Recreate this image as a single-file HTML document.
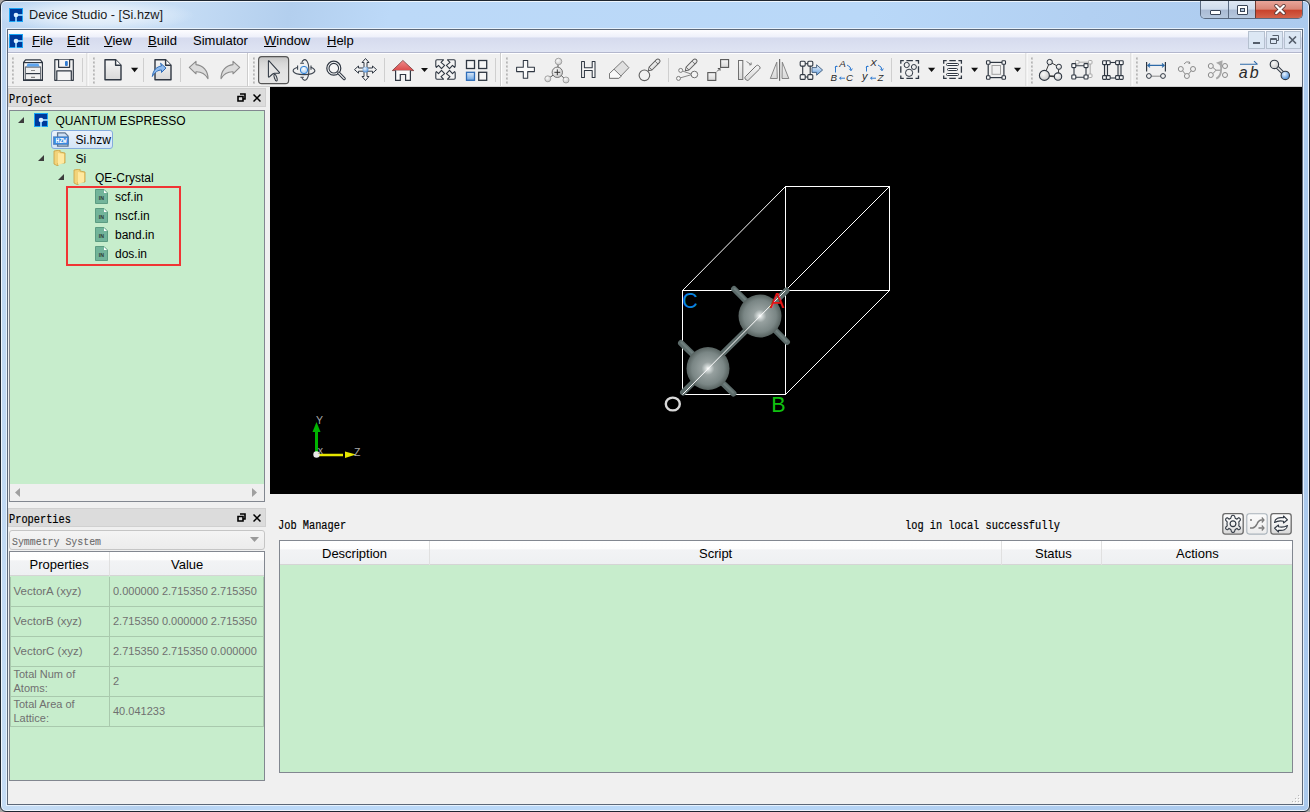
<!DOCTYPE html>
<html><head><meta charset="utf-8">
<style>
*{margin:0;padding:0;box-sizing:border-box}
html,body{width:1310px;height:812px;overflow:hidden;background:#a8a6a4;font-family:"Liberation Sans",sans-serif;}
.a{position:absolute}
#frame{left:0;top:0;width:1310px;height:812px;border:1px solid #1e2630;border-radius:6px 6px 6px 6px;box-shadow:inset 0 0 0 1px rgba(255,255,255,0.75);
  background:linear-gradient(100deg,#bcd6f2 0%,#c6ddf5 12%,#b3cfee 20%,#bcd9f8 27%,#b9d8f8 60%,#b2d0f2 75%,#a9c8ec 100%);}
#title{left:29px;top:8px;font-size:12.7px;color:#1a1a1a;}
#client{left:7px;top:29px;width:1296px;height:776px;border:1px solid #5d6878;background:#f0f0f0;box-shadow:0 0 0 1px rgba(235,244,253,0.9);}
#menubar{left:8px;top:30px;width:1294px;height:23px;background:linear-gradient(#fdfdff 0%,#eef0fa 32%,#d6dbee 36%,#dfe4f3 100%);border-bottom:1px solid #b3b7cd}
.menu{top:33px;font-size:13px;color:#000;line-height:15px}
.menu u{text-decoration:underline;text-underline-offset:1px}
#toolbar{left:8px;top:53px;width:1294px;height:34px;background:#f0f0f0;border-top:1px solid #ffffff;border-bottom:1px solid #d0d0d0}
.green{background:#c7edcc}
.dockhdr{background:#dcdcdc;border:1px solid #d0d0d0}
.mono{font-family:"Liberation Mono",monospace;font-weight:normal;-webkit-text-stroke:0.2px currentColor;transform-origin:0 0;transform:scaleX(0.86);white-space:nowrap;color:#000}
#viewport{left:270px;top:87px;width:1032px;height:407px;background:#000}
.sep{width:1px;height:24px;top:58px;background:#c9c9c9;border-right:1px solid #fbfbfb;width:2px}
.gsep{width:2px;top:54px;height:32px;background:#d6d6d6;border-right:1px solid #fff;width:2px}
.grip{top:58px;width:3px;height:24px;background:repeating-linear-gradient(#b8b8b8 0 1px,transparent 1px 3px)}
.tree{font-size:12px;color:#000;line-height:14px;white-space:nowrap}
.cap{font-size:11.5px;color:#707070;white-space:nowrap;line-height:14px}
.val{font-size:11px;color:#707070;white-space:nowrap;line-height:14px}
.hdr{font-size:13px;color:#000;white-space:nowrap;line-height:15px}
.ic{position:absolute}
</style></head>
<body>
<div id="frame" class="a"></div>
<div class="a" style="left:0;top:1px;width:200px;height:28px;background:radial-gradient(ellipse 100px 17px at 95px 14px,rgba(240,246,252,0.95) 0%,rgba(230,240,250,0.75) 55%,rgba(220,234,248,0) 100%)"></div>
<!-- app icon -->
<svg class="ic" style="left:9px;top:8px" width="14" height="14" viewBox="0 0 14 14"><rect width="14" height="14" fill="#18a4f4"/><rect x="1" y="1" width="12" height="12" fill="#00399a"/><rect x="6.1" y="7" width="1.8" height="7" fill="#8fd3ff"/><rect x="7" y="6.1" width="7" height="1.8" fill="#8fd3ff"/><circle cx="7" cy="7" r="2.3" fill="#dceeff"/></svg>
<div id="title" class="a">Device Studio - [Si.hzw]</div>
<!-- caption buttons -->
<div class="a" style="left:1200px;top:1px;width:103px;height:18px;border:1px solid #5a6a80;border-top:none;border-radius:0 0 5px 5px;overflow:hidden">
  <div class="a" style="left:0;top:0;width:28px;height:18px;background:linear-gradient(#dfe8f3 0%,#cfdcec 45%,#aabbd4 50%,#b7c9df 100%);border-right:1px solid #5a6a80"></div>
  <div class="a" style="left:28px;top:0;width:27px;height:18px;background:linear-gradient(#dfe8f3 0%,#cfdcec 45%,#aabbd4 50%,#b7c9df 100%);border-right:1px solid #6b3a30"></div>
  <div class="a" style="left:55px;top:0;width:47px;height:18px;background:linear-gradient(#e8a59a 0%,#d98677 45%,#c9432c 52%,#d5684f 100%)"></div>
  <div class="a" style="left:9px;top:9px;width:11px;height:5px;background:#fff;border:1px solid #3a4658;border-radius:1px"></div>
  <div class="a" style="left:36px;top:4px;width:11px;height:10px;border:1px solid #3a4658;border-radius:1px;background:#fff"></div>
  <div class="a" style="left:39px;top:7px;width:5px;height:4px;border:1px solid #3a4658;background:#b8c9de"></div>
  <svg class="ic" style="left:73px;top:3px" width="12" height="11" viewBox="0 0 12 11"><path d="M2.2 1.8 L9.8 9.2 M9.8 1.8 L2.2 9.2" stroke="#5a3a38" stroke-width="3.8" stroke-linecap="round"/><path d="M2.2 1.8 L9.8 9.2 M9.8 1.8 L2.2 9.2" stroke="#fff" stroke-width="2.2" stroke-linecap="round"/></svg>
</div>

<div id="client" class="a"></div>
<div id="menubar" class="a"></div>
<svg class="ic" style="left:9px;top:34px" width="14" height="14" viewBox="0 0 14 14"><rect width="14" height="14" fill="#18a4f4"/><rect x="1" y="1" width="12" height="12" fill="#00399a"/><rect x="6.1" y="7" width="1.8" height="7" fill="#8fd3ff"/><rect x="7" y="6.1" width="7" height="1.8" fill="#8fd3ff"/><circle cx="7" cy="7" r="2.3" fill="#dceeff"/></svg>
<div class="a menu" style="left:32px"><u>F</u>ile</div>
<div class="a menu" style="left:67px"><u>E</u>dit</div>
<div class="a menu" style="left:104px"><u>V</u>iew</div>
<div class="a menu" style="left:148px"><u>B</u>uild</div>
<div class="a menu" style="left:193px">Simulator</div>
<div class="a menu" style="left:264px"><u>W</u>indow</div>
<div class="a menu" style="left:327px"><u>H</u>elp</div>
<!-- mdi buttons -->
<div class="a" style="left:1248px;top:31px;width:17px;height:18px;border:1px solid #b5c0cf;background:#dce7f4"></div>
<div class="a" style="left:1266px;top:31px;width:17px;height:18px;border:1px solid #b5c0cf;background:#dce7f4"></div>
<div class="a" style="left:1284px;top:31px;width:17px;height:18px;border:1px solid #b5c0cf;background:#dce7f4"></div>
<div class="a" style="left:1253px;top:42px;width:7px;height:2px;background:#555e6b"></div>
<svg class="ic" style="left:1270px;top:35px" width="9" height="9" viewBox="0 0 9 9"><path d="M2.5 0.5h6v5h-2 M0.5 3.5h6v5h-6z M0.5 4.5h6" stroke="#555e6b" fill="none"/></svg>
<svg class="ic" style="left:1288px;top:36px" width="9" height="8" viewBox="0 0 9 8"><path d="M1 0.5 L8 7.5 M8 0.5 L1 7.5" stroke="#555e6b" stroke-width="1.6"/></svg>

<div id="toolbar" class="a"></div>
<svg class="ic" style="left:0;top:0" width="1310" height="90" viewBox="0 0 1310 90">
<defs>
<linearGradient id="gg" x1="0" y1="0" x2="0" y2="1"><stop offset="0" stop-color="#f6f6f6"/><stop offset="1" stop-color="#d8d8d8"/></linearGradient>
<linearGradient id="gb" x1="0" y1="0" x2="0" y2="1"><stop offset="0" stop-color="#dbe9f8"/><stop offset="1" stop-color="#6fa7e3"/></linearGradient>
<radialGradient id="rb" cx="0.4" cy="0.35" r="0.7"><stop offset="0" stop-color="#eef6ff"/><stop offset="1" stop-color="#3d86d6"/></radialGradient>
<linearGradient id="selg" x1="0" y1="0" x2="0" y2="1"><stop offset="0" stop-color="#c4c4c4"/><stop offset="0.25" stop-color="#d8d8d8"/><stop offset="0.5" stop-color="#e2e2e2"/><stop offset="1" stop-color="#e6e6e6"/></linearGradient>
<linearGradient id="gb3" x1="0" y1="0" x2="0" y2="1"><stop offset="0" stop-color="#f4f8fd"/><stop offset="1" stop-color="#5f9de0"/></linearGradient>
<radialGradient id="rb2" cx="0.45" cy="0.35" r="0.65"><stop offset="0" stop-color="#ffffff"/><stop offset="1" stop-color="#9cc3ea"/></radialGradient>
<radialGradient id="rg" cx="0.4" cy="0.35" r="0.7"><stop offset="0" stop-color="#fafafa"/><stop offset="1" stop-color="#c6c6c6"/></radialGradient>
<linearGradient id="gr" x1="0" y1="0" x2="0" y2="1"><stop offset="0" stop-color="#f08a8a"/><stop offset="1" stop-color="#d94a4a"/></linearGradient>
<pattern id="grip" width="3" height="3.5" patternUnits="userSpaceOnUse"><rect x="1" y="1" width="2" height="2" fill="#a8a8a8"/><rect x="2" y="1" width="1" height="1" fill="#e8e8e8"/></pattern>
</defs>
<!-- group separators -->
<g fill="#cdcdcd">
<rect x="86.5" y="53" width="1" height="33"/><rect x="247" y="53" width="1" height="33"/><rect x="500" y="53" width="1" height="33"/><rect x="1025.5" y="53" width="1" height="33"/><rect x="1130.5" y="53" width="1" height="33"/>
</g>
<g fill="#ffffff">
<rect x="87.5" y="53" width="1" height="33"/><rect x="248" y="53" width="1" height="33"/><rect x="501" y="53" width="1" height="33"/><rect x="1026.5" y="53" width="1" height="33"/><rect x="1131.5" y="53" width="1" height="33"/>
</g>
<!-- grips -->
<g><rect x="12" y="57.5" width="2" height="2" fill="#b4b4b4"/><rect x="13" y="57.5" width="1" height="1" fill="#d8d8d8"/><rect x="12" y="61.5" width="2" height="2" fill="#b4b4b4"/><rect x="13" y="61.5" width="1" height="1" fill="#d8d8d8"/><rect x="12" y="65.5" width="2" height="2" fill="#b4b4b4"/><rect x="13" y="65.5" width="1" height="1" fill="#d8d8d8"/><rect x="12" y="69.5" width="2" height="2" fill="#b4b4b4"/><rect x="13" y="69.5" width="1" height="1" fill="#d8d8d8"/><rect x="12" y="73.5" width="2" height="2" fill="#b4b4b4"/><rect x="13" y="73.5" width="1" height="1" fill="#d8d8d8"/><rect x="12" y="77.5" width="2" height="2" fill="#b4b4b4"/><rect x="13" y="77.5" width="1" height="1" fill="#d8d8d8"/><rect x="12" y="81.5" width="2" height="2" fill="#b4b4b4"/><rect x="13" y="81.5" width="1" height="1" fill="#d8d8d8"/><rect x="93" y="57.5" width="2" height="2" fill="#b4b4b4"/><rect x="94" y="57.5" width="1" height="1" fill="#d8d8d8"/><rect x="93" y="61.5" width="2" height="2" fill="#b4b4b4"/><rect x="94" y="61.5" width="1" height="1" fill="#d8d8d8"/><rect x="93" y="65.5" width="2" height="2" fill="#b4b4b4"/><rect x="94" y="65.5" width="1" height="1" fill="#d8d8d8"/><rect x="93" y="69.5" width="2" height="2" fill="#b4b4b4"/><rect x="94" y="69.5" width="1" height="1" fill="#d8d8d8"/><rect x="93" y="73.5" width="2" height="2" fill="#b4b4b4"/><rect x="94" y="73.5" width="1" height="1" fill="#d8d8d8"/><rect x="93" y="77.5" width="2" height="2" fill="#b4b4b4"/><rect x="94" y="77.5" width="1" height="1" fill="#d8d8d8"/><rect x="93" y="81.5" width="2" height="2" fill="#b4b4b4"/><rect x="94" y="81.5" width="1" height="1" fill="#d8d8d8"/><rect x="253" y="57.5" width="2" height="2" fill="#b4b4b4"/><rect x="254" y="57.5" width="1" height="1" fill="#d8d8d8"/><rect x="253" y="61.5" width="2" height="2" fill="#b4b4b4"/><rect x="254" y="61.5" width="1" height="1" fill="#d8d8d8"/><rect x="253" y="65.5" width="2" height="2" fill="#b4b4b4"/><rect x="254" y="65.5" width="1" height="1" fill="#d8d8d8"/><rect x="253" y="69.5" width="2" height="2" fill="#b4b4b4"/><rect x="254" y="69.5" width="1" height="1" fill="#d8d8d8"/><rect x="253" y="73.5" width="2" height="2" fill="#b4b4b4"/><rect x="254" y="73.5" width="1" height="1" fill="#d8d8d8"/><rect x="253" y="77.5" width="2" height="2" fill="#b4b4b4"/><rect x="254" y="77.5" width="1" height="1" fill="#d8d8d8"/><rect x="253" y="81.5" width="2" height="2" fill="#b4b4b4"/><rect x="254" y="81.5" width="1" height="1" fill="#d8d8d8"/><rect x="506" y="57.5" width="2" height="2" fill="#b4b4b4"/><rect x="507" y="57.5" width="1" height="1" fill="#d8d8d8"/><rect x="506" y="61.5" width="2" height="2" fill="#b4b4b4"/><rect x="507" y="61.5" width="1" height="1" fill="#d8d8d8"/><rect x="506" y="65.5" width="2" height="2" fill="#b4b4b4"/><rect x="507" y="65.5" width="1" height="1" fill="#d8d8d8"/><rect x="506" y="69.5" width="2" height="2" fill="#b4b4b4"/><rect x="507" y="69.5" width="1" height="1" fill="#d8d8d8"/><rect x="506" y="73.5" width="2" height="2" fill="#b4b4b4"/><rect x="507" y="73.5" width="1" height="1" fill="#d8d8d8"/><rect x="506" y="77.5" width="2" height="2" fill="#b4b4b4"/><rect x="507" y="77.5" width="1" height="1" fill="#d8d8d8"/><rect x="506" y="81.5" width="2" height="2" fill="#b4b4b4"/><rect x="507" y="81.5" width="1" height="1" fill="#d8d8d8"/><rect x="1031" y="57.5" width="2" height="2" fill="#b4b4b4"/><rect x="1032" y="57.5" width="1" height="1" fill="#d8d8d8"/><rect x="1031" y="61.5" width="2" height="2" fill="#b4b4b4"/><rect x="1032" y="61.5" width="1" height="1" fill="#d8d8d8"/><rect x="1031" y="65.5" width="2" height="2" fill="#b4b4b4"/><rect x="1032" y="65.5" width="1" height="1" fill="#d8d8d8"/><rect x="1031" y="69.5" width="2" height="2" fill="#b4b4b4"/><rect x="1032" y="69.5" width="1" height="1" fill="#d8d8d8"/><rect x="1031" y="73.5" width="2" height="2" fill="#b4b4b4"/><rect x="1032" y="73.5" width="1" height="1" fill="#d8d8d8"/><rect x="1031" y="77.5" width="2" height="2" fill="#b4b4b4"/><rect x="1032" y="77.5" width="1" height="1" fill="#d8d8d8"/><rect x="1031" y="81.5" width="2" height="2" fill="#b4b4b4"/><rect x="1032" y="81.5" width="1" height="1" fill="#d8d8d8"/><rect x="1136" y="57.5" width="2" height="2" fill="#b4b4b4"/><rect x="1137" y="57.5" width="1" height="1" fill="#d8d8d8"/><rect x="1136" y="61.5" width="2" height="2" fill="#b4b4b4"/><rect x="1137" y="61.5" width="1" height="1" fill="#d8d8d8"/><rect x="1136" y="65.5" width="2" height="2" fill="#b4b4b4"/><rect x="1137" y="65.5" width="1" height="1" fill="#d8d8d8"/><rect x="1136" y="69.5" width="2" height="2" fill="#b4b4b4"/><rect x="1137" y="69.5" width="1" height="1" fill="#d8d8d8"/><rect x="1136" y="73.5" width="2" height="2" fill="#b4b4b4"/><rect x="1137" y="73.5" width="1" height="1" fill="#d8d8d8"/><rect x="1136" y="77.5" width="2" height="2" fill="#b4b4b4"/><rect x="1137" y="77.5" width="1" height="1" fill="#d8d8d8"/><rect x="1136" y="81.5" width="2" height="2" fill="#b4b4b4"/><rect x="1137" y="81.5" width="1" height="1" fill="#d8d8d8"/></g>
<!-- separators -->
<g fill="#cfcfcf">
<rect x="82" y="58" width="1" height="24"/><rect x="143" y="58" width="1" height="24"/><rect x="180" y="58" width="1" height="24"/><rect x="384" y="58" width="1" height="24"/><rect x="495" y="58" width="1" height="24"/><rect x="668" y="58" width="1" height="24"/><rect x="891" y="58" width="1" height="24"/>
</g>
<!-- cabinet -->
<g stroke="#2f3742" stroke-width="1.2" stroke-linejoin="round">
<path d="M25.6 59.8 H40.4 L42.4 62.4 V80.4 H23.6 V62.4 Z" fill="#f6f6f6"/>
<path d="M23.6 62.6 H42.4" fill="none"/>
<path d="M25.3 67 H40.7 V80 H25.3 Z" fill="#f0f0f0"/>
<path d="M25.3 73.6 H40.7" fill="none"/>
</g>
<path d="M27.6 63.6 H38.4 L39.6 66.4 H26.4 Z" fill="#5ea5ef"/>
<path d="M24.3 63.2 L25.3 67 V80 H24.3 Z M41.7 63.2 L40.7 67 V80 H41.7 Z" fill="#dcdcdc"/>
<rect x="31" y="70" width="4" height="1" fill="#8a8a8a"/><rect x="31" y="76.8" width="4" height="1" fill="#6a6a6a"/>
<rect x="24" y="79.4" width="18" height="1.6" fill="#2f3742"/>
<!-- floppy -->
<g stroke="#2f3742" stroke-width="1.2" stroke-linejoin="round">
<path d="M54.8 59.7 H73.3 V80.3 H54.8 Z" fill="#f0f0f0"/>
<path d="M58.6 59.7 V67.3 H69.6 V59.7" fill="#f4f4f4"/>
<path d="M56.8 80.3 V70.8 H71.3 V80.3" fill="#f4f4f4"/>
</g>
<rect x="65" y="61" width="2.8" height="5" rx="1" fill="#2f7ad0"/>
<!-- new doc -->
<path d="M105 59.8 H115.6 L121 65.2 V79.8 H105 Z" fill="url(#gg)" stroke="#2f3742" stroke-width="1.4" stroke-linejoin="round"/>
<path d="M115.6 59.8 V65.2 H121" fill="#fff" stroke="#2f3742" stroke-width="1.4" stroke-linejoin="round"/>
<path d="M131 67.8 H138.2 L134.6 72.2 Z" fill="#111"/>
<!-- import doc -->
<path d="M155 59.8 H165.6 L171 65.2 V79.8 H155 Z" fill="url(#gg)" stroke="#2f3742" stroke-width="1.4" stroke-linejoin="round"/>
<path d="M165.6 59.8 V65.2 H171" fill="#fff" stroke="#2f3742" stroke-width="1.4" stroke-linejoin="round"/>
<path d="M152.3 76.5 C153 70 157 66.5 161.5 66 L160.5 63.2 L166 68 L161.5 72.5 L161.5 70 C158 70 155 72 152.3 76.5 Z" fill="#8fbbef" stroke="#2f6db8" stroke-width="1"/>
<!-- undo/redo -->
<path d="M189.3 67.4 L196 61.3 V64.6 C203 65.5 208 70.5 208 78.6 C205 73.5 201.5 71.5 196 71.7 V73.8 Z" fill="#dcdcdc" stroke="#8a8a8a" stroke-width="1.1" stroke-linejoin="round"/>
<path d="M239.7 67.4 L233 61.3 V64.6 C226 65.5 221 70.5 221 78.6 C224 73.5 227.5 71.5 233 71.7 V73.8 Z" fill="#dcdcdc" stroke="#8a8a8a" stroke-width="1.1" stroke-linejoin="round"/>
<!-- selected pointer button -->
<rect x="258.6" y="56.6" width="30" height="27" rx="3.2" fill="url(#selg)" stroke="#565656" stroke-width="1.2"/>
<ellipse cx="275.6" cy="77.6" rx="1.2" ry="3.6" transform="rotate(-18 275.6 77.6)" fill="#e0e0e0" stroke="#2f3742" stroke-width="1"/><path d="M269 60.8 Q268.4 60.4 268.4 61.2 V76.4 Q268.4 77.6 269.4 76.8 L272.6 74 L274.4 73.2 H279 Q279.8 73 279.4 72.3 Z" fill="#e4e4e4" stroke="#2f3742" stroke-width="1.05" stroke-linejoin="round"/>
<!-- rotate -->
<g fill="none" stroke="#3a424d" stroke-width="1.1">
<path d="M297.8 67.2 C294.5 68.2 292.8 69.8 293.2 71.3 C294 73.6 299 74.6 304 74.6 C309 74.6 314 73.6 314.8 71.3 C315.2 69.8 313.5 68.2 310.8 67.2"/>
<path d="M297.6 65.6 V69.8 M311 65.6 V69.8"/>
<path d="M301.8 62.6 C302.5 59.8 305 58.8 306.6 60.6 C309.6 64 309.6 76 306.6 79.4 C305 81 302.6 80 301.8 77.4"/>
<path d="M300.2 63.3 H304 M300.4 77.3 H303.8"/>
</g>
<circle cx="304" cy="70" r="3.7" fill="url(#rb2)" stroke="#2f80d4" stroke-width="1"/>
<!-- zoom -->
<circle cx="333.8" cy="68.2" r="7" fill="#f6f6f6" stroke="#2f3742" stroke-width="1.2"/>
<circle cx="333.8" cy="68.2" r="4.8" fill="none" stroke="#2f3742" stroke-width="1.1"/>
<path d="M338.8 73.2 L344.2 78.6" stroke="#2f3742" stroke-width="3.2" stroke-linecap="round"/>
<path d="M338.8 73.2 L344.2 78.6" stroke="#f4f4f4" stroke-width="1.2" stroke-linecap="round"/>
<!-- move -->
<path d="M365.5 58.5 L369 62.5 H367 V68 H372.5 V66 L376.5 69.6 L372.5 73.2 V71.2 H367 V76.5 H369 L365.5 80.5 L362 76.5 H364 V71.2 H358.5 V73.2 L354.5 69.6 L358.5 66 V68 H364 V62.5 H362 Z" fill="#f4f4f4" stroke="#2f3742" stroke-width="1" stroke-linejoin="round"/>
<circle cx="365.5" cy="69.6" r="2.9" fill="url(#rb)"/>
<!-- home -->
<path d="M392.3 70.6 L402.9 60.4 L413.8 70.6 Z" fill="url(#gr)" stroke="#6a3030" stroke-width="0.7"/>
<path d="M395.6 70.6 V80.3 H400.3 V74.5 H405.6 V80.3 H410.4 V70.6" fill="#fafafa" stroke="#2f3742" stroke-width="1.2"/>
<path d="M421 67.9 H428 L424.5 72 Z" fill="#111"/>
<!-- expand arrows -->
<g fill="#f4f4f4" stroke="#2f3742" stroke-width="1.1" stroke-linejoin="round">
<path id="exa" d="M435.8 61 Q435.8 59.8 437 59.8 H443.5 L441 62.4 L444.6 65.4 L441.5 68.6 L438.5 65.4 L436.4 67.4 Q435.8 66.8 435.8 66 Z"/>
<use href="#exa" transform="translate(891 0) scale(-1 1)"/>
<use href="#exa" transform="translate(0 139) scale(1 -1)"/>
<use href="#exa" transform="translate(891 139) scale(-1 -1)"/>
</g>
<!-- grid -->
<g stroke="#2f3742" stroke-width="1.3" fill="#f6f6f6">
<rect x="466.5" y="60.5" width="8" height="8"/><rect x="478.7" y="60.5" width="8" height="8"/>
<rect x="466.5" y="72.3" width="8" height="8" fill="url(#gb)" stroke="#2f6db8"/><rect x="478.7" y="72.3" width="8" height="8"/>
</g>
<!-- plus -->
<path d="M523.3 60.5 H527.7 V67.2 H534.4 V71.6 H527.7 V78.3 H523.3 V71.6 H516.6 V67.2 H523.3 Z" fill="#fafafa" stroke="#2f3742" stroke-width="1.05" stroke-linejoin="round"/>
<!-- atom plus -->
<g stroke="#555" stroke-width="1"><line x1="558.3" y1="62" x2="557.5" y2="72"/><line x1="547.7" y1="79" x2="557.5" y2="72"/><line x1="566" y1="80" x2="557.5" y2="72"/></g>
<circle cx="558.5" cy="61.5" r="3.3" fill="url(#rg)" stroke="#8a8a8a" stroke-width="0.7"/>
<circle cx="547.8" cy="78.8" r="3" fill="url(#rg)" stroke="#8a8a8a" stroke-width="0.7"/>
<circle cx="566" cy="80" r="3" fill="url(#rg)" stroke="#8a8a8a" stroke-width="0.7"/>
<circle cx="557.3" cy="72.3" r="5.2" fill="url(#rg)" stroke="#6a6a6a" stroke-width="0.9"/>
<path d="M557.3 69.4 V75.2 M554.4 72.3 H560.2" stroke="#333" stroke-width="1"/>
<!-- H -->
<path d="M581.6 61.4 H584.4 V67.8 H592.2 V61.4 H595 V77.5 H592.2 V70.4 H584.4 V77.5 H581.6 Z" fill="#fafafa" stroke="#2f3742" stroke-width="1.05" stroke-linejoin="round"/>
<!-- eraser -->
<path d="M609.5 73.5 L622.6 61 L628.9 67.7 L618.7 78.3 H609.5 Z" fill="#e0e0e0" stroke="#7a7a7a" stroke-width="1"/>
<path d="M609.5 73.5 L614 69.2 L621.3 76.3 L618.7 78.3 H609.5 Z" fill="#fafafa" stroke="#7a7a7a" stroke-width="1"/>
<!-- pin -->
<circle cx="644.4" cy="75.3" r="5.3" fill="#f2f2f2" stroke="#606060" stroke-width="1.1"/>
<g transform="translate(648.3 70.8) rotate(-45)"><path d="M0 0 L3.2 -2.1 H13.6 A2.1 2.1 0 0 1 13.6 2.1 H3.2 Z" fill="url(#gg)" stroke="#606060" stroke-width="0.95" stroke-linejoin="round"/><path d="M11.6 -2 V2 M3.2 -2 V2" stroke="#606060" stroke-width="0.8"/></g>
<!-- bond tool -->
<g stroke="#7a7a7a" stroke-width="0.9" fill="none"><line x1="682.5" y1="71" x2="691" y2="74"/><line x1="680.5" y1="77.8" x2="691" y2="74.8"/></g>
<circle cx="680.7" cy="70.4" r="2" fill="#f4f4f4" stroke="#707070" stroke-width="0.9"/>
<circle cx="678.5" cy="78.4" r="2" fill="#f4f4f4" stroke="#707070" stroke-width="0.9"/>
<circle cx="694.4" cy="74.5" r="3.3" fill="#f4f4f4" stroke="#707070" stroke-width="1"/>
<g transform="translate(685.3 70.8) rotate(-45)"><path d="M0 0 L3.2 -2.1 H13.6 A2.1 2.1 0 0 1 13.6 2.1 H3.2 Z" fill="url(#gg)" stroke="#606060" stroke-width="0.95" stroke-linejoin="round"/><path d="M11.6 -2 V2 M3.2 -2 V2" stroke="#606060" stroke-width="0.8"/></g>
<!-- scale -->
<rect x="707.8" y="72.6" width="8" height="7.8" fill="url(#gg)" stroke="#555" stroke-width="1.1"/>
<rect x="720.6" y="59.6" width="8" height="7.8" fill="url(#gg)" stroke="#555" stroke-width="1.1"/>
<path d="M717 71.5 L720 68.5 M717.8 68.5 H720 V70.7" stroke="#555" stroke-width="1" fill="none"/>
<!-- skew -->
<rect x="738.5" y="60.5" width="4.3" height="19" fill="url(#gg)" stroke="#707070" stroke-width="1"/>
<path d="M745.3 76.7 L756.2 65.8 Q757.5 64.6 758.8 65.8 L759.8 66.8 Q760.6 68 759.6 69 L748.5 80 Q747.3 81 746.3 80 L745.3 79 Q744.3 77.8 745.3 76.7 Z" fill="url(#gg)" stroke="#707070" stroke-width="1"/>
<path d="M746.5 61.5 L751 64.5 M749 64.8 H751.2 V62.5" stroke="#707070" stroke-width="0.8" fill="none"/>
<!-- mirror -->
<rect x="779" y="59" width="1.2" height="21.8" fill="#6a6a6a"/>
<path d="M776.8 62.2 L770.3 78.5 H777.3 Z" fill="url(#gg)" stroke="#7a7a7a" stroke-width="0.9" stroke-linejoin="round"/>
<path d="M782.3 62.2 L788.8 78.5 H782 Z" fill="url(#gg)" stroke="#7a7a7a" stroke-width="0.9" stroke-linejoin="round"/>
<!-- lattice arrow -->
<g stroke="#2f3742" stroke-width="1.1" fill="#f6f6f6">
<line x1="802.7" y1="63" x2="802.7" y2="77"/><line x1="810.2" y1="63" x2="810.2" y2="77"/>
<line x1="804" y1="63.7" x2="808" y2="63.7"/><line x1="804" y1="77" x2="808" y2="77"/>
<rect x="800.2" y="61.3" width="5" height="4.8" rx="1"/><rect x="807.8" y="61.3" width="5" height="4.8" rx="1"/>
<rect x="800.2" y="74.6" width="5" height="4.8" rx="1"/><rect x="807.8" y="74.6" width="5" height="4.8" rx="1"/>
</g>
<path d="M812 67.6 H816.6 V64.8 L822.6 70 L816.6 75.2 V72.4 H812 Z" fill="url(#gb3)" stroke="#3d5a7a" stroke-width="0.9" stroke-linejoin="round"/>
<!-- ABC -->
<g font-family="Liberation Sans" font-style="italic" font-size="9.8" fill="#2a2a2a">
<text x="839.3" y="67">A</text><text x="830.5" y="80.8">B</text><text x="846" y="80.8">C</text>
<text x="870.3" y="65.8">X</text><text x="862" y="79.5" font-size="11">y</text><text x="877.5" y="80.8">Z</text>
</g>
<g stroke="#2f7ad0" stroke-width="1" fill="none">
<path d="M835.5 72.5 V66.5 H837.5 M836.5 65.7 L835.2 67.5"/><path d="M847 65 Q851 66.5 851 70 M849.3 68.8 L851 70.8 L852.3 68.5"/><path d="M845 78.2 H839.8 M841.2 76.8 L839.5 78.2 L841.2 79.5"/>
<path d="M866.5 71.5 V66.5 H868.5 M867.5 65.7 L866.2 67.5"/><path d="M878 65 Q882 66.5 882 70 M880.3 68.8 L882 70.8 L883.3 68.5"/><path d="M876 78.2 H870.8 M872.2 76.8 L870.5 78.2 L872.2 79.5"/>
</g>
<!-- group select -->
<rect x="900.8" y="60.7" width="17.7" height="17.7" fill="none" stroke="#2f3742" stroke-width="1.3" stroke-dasharray="6 2.6 6.5 2.6" stroke-dashoffset="3"/>
<g fill="none" stroke="#2f3742" stroke-width="1"><circle cx="906.7" cy="65" r="2.6"/><circle cx="913.9" cy="67" r="2.5"/><circle cx="909.1" cy="72.8" r="3.6"/></g>
<path d="M928 67.8 H935.2 L931.6 72.1 Z" fill="#111"/>
<!-- align -->
<rect x="943.7" y="60.7" width="17.7" height="17.7" fill="none" stroke="#2f3742" stroke-width="1.3" stroke-dasharray="6 2.6 6.5 2.6" stroke-dashoffset="3"/>
<g fill="#ffffff" stroke="#2f3742" stroke-width="1"><rect x="946.5" y="63.5" width="12" height="2" rx="1"/><rect x="947.5" y="68.5" width="10" height="2" rx="1"/><rect x="946.5" y="73.5" width="12" height="2" rx="1"/></g>
<path d="M971.1 67.8 H978.1 L974.6 72.1 Z" fill="#111"/>
<!-- frame -->
<rect x="992" y="65.5" width="8.5" height="8.8" fill="none" stroke="#a0a0a0" stroke-width="1"/>
<rect x="988.2" y="62.4" width="15.7" height="15.2" fill="none" stroke="#2f3742" stroke-width="1.2"/>
<g fill="#fafafa" stroke="#2f3742" stroke-width="1.1"><rect x="986.5" y="60.7" width="3.5" height="3.5" rx="0.8"/><rect x="1002" y="60.7" width="3.5" height="3.5" rx="0.8"/><rect x="986.5" y="75.7" width="3.5" height="3.5" rx="0.8"/><rect x="1002" y="75.7" width="3.5" height="3.5" rx="0.8"/></g>
<path d="M1014 67.8 H1021 L1017.5 72.1 Z" fill="#111"/>
<!-- molecule -->
<g stroke="#3a3a3a" stroke-width="1"><line x1="1049.7" y1="62" x2="1044.4" y2="75"/><line x1="1049.7" y1="62" x2="1058.9" y2="66.8"/><line x1="1058.9" y1="66.8" x2="1058" y2="76.6"/><line x1="1044.4" y1="75.8" x2="1058" y2="76.6" stroke-width="1.6"/></g>
<circle cx="1044.4" cy="75.4" r="5" fill="url(#rg)" stroke="#2f3742" stroke-width="1.1"/>
<circle cx="1049.7" cy="62.1" r="2.7" fill="url(#rg)" stroke="#2f3742" stroke-width="1"/>
<circle cx="1058.9" cy="66.8" r="2.6" fill="url(#rg)" stroke="#2f3742" stroke-width="1"/>
<circle cx="1058" cy="76.6" r="3.7" fill="url(#rg)" stroke="#2f3742" stroke-width="1.1"/>
<!-- supercell -->
<g fill="#f6f6f6" stroke="#a8a8a8" stroke-width="1"><rect x="1075.5" y="60.5" width="3.5" height="3.5" rx="0.8"/><rect x="1088.5" y="60.5" width="3.5" height="3.5" rx="0.8"/><rect x="1088.5" y="74" width="3.5" height="3.5" rx="0.8"/><path d="M1079 62.2 H1088.5 M1090.2 64 V74" fill="none"/></g>
<path d="M1074 65.8 H1086 V77.2 H1074 Z" fill="none" stroke="#2f3742" stroke-width="1.1"/>
<g fill="#fafafa" stroke="#2f3742" stroke-width="1.1"><rect x="1071.8" y="63.6" width="4" height="4" rx="0.8"/><rect x="1084" y="63.6" width="4" height="4" rx="0.8"/><rect x="1071.8" y="75" width="4" height="4" rx="0.8"/><rect x="1084" y="75" width="4" height="4" rx="0.8"/></g>
<!-- columns -->
<g stroke="#2f3742" stroke-width="1.1"><rect x="1104.5" y="63" width="3" height="14.5" fill="#e4e4e4"/><rect x="1118" y="63" width="3" height="14.5" fill="#e4e4e4"/><line x1="1109" y1="62.5" x2="1116" y2="62.5"/><line x1="1109" y1="78" x2="1116" y2="78"/></g>
<g fill="#fafafa" stroke="#2f3742" stroke-width="1.1"><rect x="1102.6" y="60.8" width="3.8" height="3.8" rx="0.8"/><rect x="1106.4" y="60.8" width="3.8" height="3.8" rx="0.8"/><rect x="1115.6" y="60.8" width="3.8" height="3.8" rx="0.8"/><rect x="1119.4" y="60.8" width="3.8" height="3.8" rx="0.8"/>
<rect x="1102.6" y="75.6" width="3.8" height="3.8" rx="0.8"/><rect x="1106.4" y="75.6" width="3.8" height="3.8" rx="0.8"/><rect x="1115.6" y="75.6" width="3.8" height="3.8" rx="0.8"/><rect x="1119.4" y="75.6" width="3.8" height="3.8" rx="0.8"/></g>
<!-- distance -->
<g stroke="#2f3742" stroke-width="1.2"><line x1="1146.6" y1="62" x2="1146.6" y2="71.6"/><line x1="1165.4" y1="62" x2="1165.4" y2="71.6"/></g>
<path d="M1147.5 65.4 H1164.5 M1150 63.5 L1147.8 65.4 L1150 67.3 M1162 63.5 L1164.2 65.4 L1162 67.3" stroke="#2d6aa8" stroke-width="1.1" fill="none"/>
<line x1="1151.5" y1="76.2" x2="1160.5" y2="76.2" stroke="#888" stroke-width="1"/>
<circle cx="1148.9" cy="76" r="2.4" fill="none" stroke="#2f3742" stroke-width="1"/><circle cx="1163" cy="76" r="2.4" fill="none" stroke="#2f3742" stroke-width="1"/>
<!-- angle -->
<g stroke="#8a8a8a" fill="none" stroke-width="1"><line x1="1182.5" y1="70.7" x2="1185.2" y2="74"/><line x1="1191.3" y1="70.7" x2="1188.6" y2="74"/>
<circle cx="1180.8" cy="69" r="2.5"/><circle cx="1193" cy="69" r="2.5"/><circle cx="1186.9" cy="76" r="2.5"/><path d="M1184 64 L1186.3 62 H1189.5 M1188.5 63.5 L1190 62 M1189.7 62.5 V64"/></g>
<!-- dihedral -->
<g stroke="#8a8a8a" fill="none" stroke-width="1"><circle cx="1210.8" cy="66" r="2.5"/><circle cx="1225" cy="66" r="2.5"/><circle cx="1210.8" cy="75" r="2.5"/><circle cx="1225" cy="75" r="2.5"/>
<path d="M1213 67.5 L1216 70.2 L1213 73.5 M1216 70.2 H1221"/></g>
<path d="M1216.2 78.6 C1221.2 76.5 1222.2 69 1220.3 63.2" stroke="#a8a8a8" stroke-width="1.9" fill="none"/>
<path d="M1216 62.8 L1222.6 60.2 L1222 66.6 Z" fill="#a8a8a8"/>
<!-- ab -->
<path d="M1240 64.3 H1257.5 M1254 61.2 L1257.5 64.3" stroke="#2d6aa8" stroke-width="1.1" fill="none"/>
<text x="1238.8" y="77.9" font-family="Liberation Sans" font-style="italic" font-size="16" letter-spacing="2" fill="#2a2a2a">ab</text>
<!-- bond -->
<path d="M1276.5 66.5 L1283.5 73.5" stroke="#2f3742" stroke-width="3.6"/>
<path d="M1276.5 66.5 L1283.5 73.5" stroke="#e6e6e6" stroke-width="1.6"/>
<circle cx="1274.4" cy="64.4" r="4.2" fill="url(#rg)" stroke="#2f3742" stroke-width="1.1"/>
<circle cx="1285.3" cy="75.4" r="4.2" fill="url(#rb)" stroke="#2f3742" stroke-width="1.1"/>
</svg>


<!-- project dock -->
<div class="a dockhdr" style="left:8px;top:88px;width:258px;height:19px"></div>
<div class="a mono" style="left:9px;top:93px;font-size:12px">Project</div>
<svg class="ic" style="left:237px;top:93px" width="9" height="9" viewBox="0 0 9 9"><path d="M3 1h5v5h-2 M1 3.5h5v4.5h-5z" stroke="#000" stroke-width="1.6" fill="none"/></svg>
<svg class="ic" style="left:253px;top:94px" width="8" height="8" viewBox="0 0 8 8"><path d="M0.5 0.5 L7.5 7.5 M7.5 0.5 L0.5 7.5" stroke="#000" stroke-width="1.5"/></svg>
<div class="a green" style="left:9px;top:110px;width:256px;height:392px;border:1px solid #828790"></div>
<div class="a" style="left:10px;top:484px;width:254px;height:17px;background:#efefef"></div>
<svg class="ic" style="left:15px;top:488px" width="5" height="9" viewBox="0 0 5 9"><path d="M5 0 L0 4.5 L5 9z" fill="#a0a0a0"/></svg>
<svg class="ic" style="left:252px;top:488px" width="5" height="9" viewBox="0 0 5 9"><path d="M0 0 L5 4.5 L0 9z" fill="#a0a0a0"/></svg>

<!-- tree -->
<svg class="ic" style="left:18px;top:117px" width="6" height="6" viewBox="0 0 6 6"><path d="M6 0 L6 6 L0 6z" fill="#3c3c3c"/></svg>
<svg class="ic" style="left:34px;top:113px" width="14" height="14" viewBox="0 0 14 14"><rect width="14" height="14" fill="#18a4f4"/><rect x="1" y="1" width="12" height="12" fill="#00399a"/><rect x="6.1" y="7" width="1.8" height="7" fill="#8fd3ff"/><rect x="7" y="6.1" width="7" height="1.8" fill="#8fd3ff"/><circle cx="7" cy="7" r="2.3" fill="#dceeff"/></svg>
<div class="a tree" style="left:55.5px;top:114px">QUANTUM ESPRESSO</div>
<div class="a" style="left:51px;top:130px;width:62px;height:19px;border:1px solid #84acdd;border-radius:3px;background:linear-gradient(#eaf2fb,#d3e4f6)"></div>
<svg class="ic" style="left:53px;top:132px" width="16" height="15" viewBox="0 0 16 15"><path d="M4.6 0.9h7.4l3 3v10.2h-10.4z" fill="#cfe0f4" stroke="#5f7590" stroke-width="1.3"/><rect x="0.5" y="4.8" width="15" height="7.6" fill="#3a8ae0" stroke="#4a76a8" stroke-width="0.6"/><text x="8" y="11" font-size="6.6" font-family="Liberation Mono" font-weight="bold" fill="#fff" text-anchor="middle" letter-spacing="-0.3">HZW</text></svg>
<div class="a tree" style="left:75.5px;top:133px">Si.hzw</div>
<svg class="ic" style="left:38px;top:155px" width="6" height="6" viewBox="0 0 6 6"><path d="M6 0 L6 6 L0 6z" fill="#3c3c3c"/></svg>
<svg class="ic" style="left:53px;top:150px" width="14" height="16" viewBox="0 0 14 16"><path d="M1 1 L7 0 L7 2 L12 3 L12 13 L5 13 L5 16 L1 14z" fill="#f2d37a" stroke="#c9a040" stroke-width="0.8"/><path d="M5 3 L11 4 L11 13 L5 15z" fill="#ffe9a0"/></svg>
<div class="a tree" style="left:75.5px;top:152px">Si</div>
<svg class="ic" style="left:58px;top:174px" width="6" height="6" viewBox="0 0 6 6"><path d="M6 0 L6 6 L0 6z" fill="#3c3c3c"/></svg>
<svg class="ic" style="left:73px;top:169px" width="14" height="16" viewBox="0 0 14 16"><path d="M1 1 L7 0 L7 2 L12 3 L12 13 L5 13 L5 16 L1 14z" fill="#f2d37a" stroke="#c9a040" stroke-width="0.8"/><path d="M5 3 L11 4 L11 13 L5 15z" fill="#ffe9a0"/></svg>
<div class="a tree" style="left:95px;top:171px">QE-Crystal</div>
<div class="a" style="left:66px;top:186px;width:115px;height:80px;border:2px solid #f03434"></div>
<svg class="ic" style="left:95px;top:189px" width="13" height="15" viewBox="0 0 13 15"><path d="M0.5 0.5h8.5l3.5 3.5v10.5h-12z" fill="#72b49a" stroke="#5c9c82"/><path d="M9 1l3 3h-3z" fill="#ffffff"/><text x="6.3" y="11.2" font-size="5.2" font-family="Liberation Sans" font-weight="bold" fill="#2e3a34" text-anchor="middle">IN</text></svg>
<div class="a tree" style="left:115px;top:190px">scf.in</div>
<svg class="ic" style="left:95px;top:208px" width="13" height="15" viewBox="0 0 13 15"><path d="M0.5 0.5h8.5l3.5 3.5v10.5h-12z" fill="#72b49a" stroke="#5c9c82"/><path d="M9 1l3 3h-3z" fill="#ffffff"/><text x="6.3" y="11.2" font-size="5.2" font-family="Liberation Sans" font-weight="bold" fill="#2e3a34" text-anchor="middle">IN</text></svg>
<div class="a tree" style="left:115px;top:209px">nscf.in</div>
<svg class="ic" style="left:95px;top:227px" width="13" height="15" viewBox="0 0 13 15"><path d="M0.5 0.5h8.5l3.5 3.5v10.5h-12z" fill="#72b49a" stroke="#5c9c82"/><path d="M9 1l3 3h-3z" fill="#ffffff"/><text x="6.3" y="11.2" font-size="5.2" font-family="Liberation Sans" font-weight="bold" fill="#2e3a34" text-anchor="middle">IN</text></svg>
<div class="a tree" style="left:115px;top:228px">band.in</div>
<svg class="ic" style="left:95px;top:246px" width="13" height="15" viewBox="0 0 13 15"><path d="M0.5 0.5h8.5l3.5 3.5v10.5h-12z" fill="#72b49a" stroke="#5c9c82"/><path d="M9 1l3 3h-3z" fill="#ffffff"/><text x="6.3" y="11.2" font-size="5.2" font-family="Liberation Sans" font-weight="bold" fill="#2e3a34" text-anchor="middle">IN</text></svg>
<div class="a tree" style="left:115px;top:247px">dos.in</div>

<!-- properties dock -->
<div class="a dockhdr" style="left:8px;top:508px;width:258px;height:19px"></div>
<div class="a mono" style="left:9px;top:513px;font-size:12px">Properties</div>
<svg class="ic" style="left:237px;top:513px" width="9" height="9" viewBox="0 0 9 9"><path d="M3 1h5v5h-2 M1 3.5h5v4.5h-5z" stroke="#000" stroke-width="1.6" fill="none"/></svg>
<svg class="ic" style="left:253px;top:514px" width="8" height="8" viewBox="0 0 8 8"><path d="M0.5 0.5 L7.5 7.5 M7.5 0.5 L0.5 7.5" stroke="#000" stroke-width="1.5"/></svg>
<div class="a" style="left:9px;top:530px;width:256px;height:20px;border:1px solid #c5c5c5;border-radius:3px;background:linear-gradient(#f4f4f4,#ececec)"></div>
<div class="a mono" style="left:12px;top:535px;font-size:11.5px;font-weight:normal;color:#6a6a6a;-webkit-text-stroke:0.1px #6a6a6a">Symmetry System</div>
<svg class="ic" style="left:250px;top:537px" width="9" height="5" viewBox="0 0 9 5"><path d="M0 0 L9 0 L4.5 5z" fill="#9a9a9a"/></svg>
<div class="a green" style="left:9px;top:551px;width:256px;height:230px;border:1px solid #828790"></div>
<div class="a" style="left:10px;top:552px;width:254px;height:24px;background:linear-gradient(#ffffff 0%,#fdfdfd 35%,#f2f3f5 38%,#eef0f2 100%);border-bottom:1px solid #d5d5d5"></div>
<div class="a" style="left:109px;top:552px;width:1px;height:24px;background:#e0e0e0"></div>
<div class="a hdr" style="left:29.5px;top:557px">Properties</div>
<div class="a hdr" style="left:171px;top:557px">Value</div>
<div class="a" style="left:10px;top:606px;width:254px;height:1px;background:#a9c9ad"></div>
<div class="a" style="left:10px;top:636px;width:254px;height:1px;background:#a9c9ad"></div>
<div class="a" style="left:10px;top:666px;width:254px;height:1px;background:#a9c9ad"></div>
<div class="a" style="left:10px;top:696px;width:254px;height:1px;background:#a9c9ad"></div>
<div class="a" style="left:10px;top:726px;width:254px;height:1px;background:#a9c9ad"></div>
<div class="a" style="left:109px;top:577px;width:1px;height:149px;background:#a9c9ad"></div>
<div class="a" style="left:263px;top:577px;width:1px;height:149px;background:#a9c9ad"></div>
<div class="a" style="left:10px;top:577px;width:1px;height:149px;background:#a9c9ad"></div>
<div class="a cap" style="left:13.5px;top:584px">VectorA (xyz)</div>
<div class="a val" style="left:113px;top:584px">0.000000 2.715350 2.715350</div>
<div class="a cap" style="left:13.5px;top:614px">VectorB (xyz)</div>
<div class="a val" style="left:113px;top:614px">2.715350 0.000000 2.715350</div>
<div class="a cap" style="left:13.5px;top:644px">VectorC (xyz)</div>
<div class="a val" style="left:113px;top:644px">2.715350 2.715350 0.000000</div>
<div class="a cap" style="left:13.5px;top:667px;font-size:11px">Total Num of<br>Atoms:</div>
<div class="a val" style="left:113px;top:674px">2</div>
<div class="a cap" style="left:13.5px;top:697px;font-size:11px">Total Area of<br>Lattice:</div>
<div class="a val" style="left:113px;top:704px">40.041233</div>

<div id="viewport" class="a"></div>
<svg class="ic" style="left:270px;top:87px" width="1032" height="407" viewBox="270 87 1032 407">
<defs>
<radialGradient id="atom" cx="0.5" cy="0.5" r="0.5" fx="0.5" fy="0.5">
<stop offset="0" stop-color="#ffffff"/><stop offset="0.1" stop-color="#d4dad9"/><stop offset="0.3" stop-color="#96a09f"/><stop offset="0.75" stop-color="#7a8685"/><stop offset="1" stop-color="#56615f"/>
</radialGradient>
<linearGradient id="stub1" gradientUnits="userSpaceOnUse" x1="0" y1="0" x2="4" y2="-4"><stop offset="0" stop-color="#4a5857"/><stop offset="0.5" stop-color="#6f7e7d"/><stop offset="1" stop-color="#4a5857"/></linearGradient>
</defs>
<g stroke="#ffffff" stroke-width="1" fill="none" shape-rendering="crispEdges">
<path d="M682.5 290.5 H785.5 V394.5 H682.5 Z"/>
<path d="M785.5 186.5 H889.5 V290.5 H785.5 Z"/>
</g>
<g stroke="#ffffff" stroke-width="1" fill="none">
<line x1="682.5" y1="290.5" x2="785.5" y2="186.5"/>
<line x1="785.5" y1="290.5" x2="889.5" y2="186.5"/>
<line x1="785.5" y1="394.5" x2="889.5" y2="290.5"/>
</g>
<g stroke="#5c6b6a" stroke-width="6" stroke-linecap="round">
<line x1="681" y1="343" x2="733.5" y2="393.5"/>
<line x1="734" y1="289" x2="787" y2="342"/>
<line x1="683" y1="392.5" x2="786.5" y2="290.5"/>
</g>
<g stroke="#6e7d7c" stroke-width="2.2" stroke-linecap="round">
<line x1="681.5" y1="342.5" x2="733" y2="392.5"/>
<line x1="734.5" y1="288.8" x2="786.5" y2="341.2"/>
</g>
<circle cx="708" cy="368.5" r="21.5" fill="url(#atom)"/>
<circle cx="760" cy="316" r="21.5" fill="url(#atom)"/>
<line x1="682.5" y1="394.5" x2="785.5" y2="290.5" stroke="#ffffff" stroke-width="1"/>
<text x="682.3" y="307.8" font-size="21.5" font-family="Liberation Sans" fill="#0a84e0">C</text>
<text x="769.8" y="307.8" font-size="21.5" font-family="Liberation Sans" fill="#e41414">A</text>
<text x="771.3" y="411.8" font-size="21.5" font-family="Liberation Sans" fill="#10c010">B</text>
<ellipse cx="672.8" cy="404" rx="7" ry="6.4" fill="none" stroke="#d8d8d8" stroke-width="2.4"/>
<!-- axes -->
<line x1="316.5" y1="454" x2="316.5" y2="432" stroke="#00b400" stroke-width="3"/>
<path d="M312.5 432 L316.5 422 L320.5 432z" fill="#00b400"/>
<line x1="317" y1="455" x2="343" y2="455" stroke="#e6e600" stroke-width="2.5"/>
<path d="M345 451.5 L356 454.5 L345 458z" fill="#e6e600"/>
<circle cx="316.5" cy="454.5" r="3.2" fill="#e8e8e8"/>
<text x="316" y="424" font-size="10.5" font-family="Liberation Sans" fill="#a8a8a8">Y</text>
<text x="317.8" y="453.8" font-size="10.5" font-family="Liberation Sans" fill="#a8a8a8">x</text>
<text x="354" y="455.5" font-size="10.5" font-family="Liberation Sans" fill="#a8a8a8">Z</text>
</svg>

<!-- job manager -->
<div class="a mono" style="left:278px;top:519px;font-size:12px">Job Manager</div>
<div class="a mono" style="left:905px;top:519px;font-size:12px">log in local successfully</div>
<svg class="ic" style="left:1218px;top:508px" width="80" height="32" viewBox="1218 508 80 32">
<defs>
<linearGradient id="bg1" x1="0" y1="0" x2="0" y2="1"><stop offset="0" stop-color="#fdfdfd"/><stop offset="0.5" stop-color="#f2f2f2"/><stop offset="1" stop-color="#d6d6d6"/></linearGradient>
<linearGradient id="bg2" x1="0" y1="0" x2="0" y2="1"><stop offset="0" stop-color="#fbfbfb"/><stop offset="1" stop-color="#ececec"/></linearGradient>
</defs>
<rect x="1222.8" y="513.7" width="20.4" height="20.4" rx="2.5" fill="url(#bg1)" stroke="#6a6a6a" stroke-width="1.3"/>
<rect x="1246.8" y="513.7" width="20.4" height="20.4" rx="2.5" fill="url(#bg2)" stroke="#a9b3bb" stroke-width="1.1"/>
<rect x="1270.8" y="513.7" width="20.4" height="20.4" rx="2.5" fill="url(#bg1)" stroke="#6a6a6a" stroke-width="1.3"/>
<!-- gear -->
<g transform="translate(1233 523.8)">
<path d="M-1.6 -7.6 A1.8 1.8 0 0 1 1.6 -7.6 L2.2 -5.6 L4 -4.6 L5.4 -6 A1.8 1.8 0 0 1 7.2 -3.4 L5.8 -2 L6 0 L5.8 2 L7.2 3.4 A1.8 1.8 0 0 1 5.4 6 L4 4.6 L2.2 5.6 L1.6 7.6 A1.8 1.8 0 0 1 -1.6 7.6 L-2.2 5.6 L-4 4.6 L-5.4 6 A1.8 1.8 0 0 1 -7.2 3.4 L-5.8 2 L-6 0 L-5.8 -2 L-7.2 -3.4 A1.8 1.8 0 0 1 -5.4 -6 L-4 -4.6 L-2.2 -5.6 Z" fill="none" stroke="#2f3742" stroke-width="1.1" stroke-linejoin="round"/>
<circle r="2.9" fill="none" stroke="#2f3742" stroke-width="1.2"/>
</g>
<!-- shuffle -->
<g stroke="#7a7a7a" stroke-width="1.6" fill="none">
<path d="M1250 520 H1252 M1250 528 H1252.5 C1255 528 1256 526 1257 524 C1258 521.5 1259 520 1261.5 520 H1263.5 M1258.5 528 H1263.5"/>
<path d="M1261.8 517.5 L1264 520 L1261.8 522.5 M1261.8 525.5 L1264 528 L1261.8 530.5" stroke-width="1.2"/>
</g>
<!-- refresh -->
<g stroke="#2f3742" stroke-width="1.1" fill="#fafafa" stroke-linejoin="round">
<path d="M1274.5 522.5 C1275 518.5 1279 517 1283.5 517.8 V516 L1287.5 519.8 L1283.5 523 V521.2 C1280 520.5 1277 521 1274.5 522.5 Z"/>
<path d="M1287.5 525.5 C1287 529.5 1283 531 1278.5 530.2 V532 L1274.5 528.2 L1278.5 525 V526.8 C1282 527.5 1285 527 1287.5 525.5 Z"/>
</g>
</svg>
<svg class="ic" style="left:1289px;top:794px" width="12" height="12" viewBox="0 0 12 12"><g fill="#b8b8b8"><rect x="9" y="1" width="1" height="1"/><rect x="6" y="4" width="1" height="1"/><rect x="9" y="4" width="1" height="1"/><rect x="3" y="7" width="1" height="1"/><rect x="6" y="7" width="1" height="1"/><rect x="9" y="7" width="1" height="1"/></g><g fill="#fff"><rect x="10" y="2" width="1" height="1"/><rect x="7" y="5" width="1" height="1"/><rect x="10" y="5" width="1" height="1"/><rect x="4" y="8" width="1" height="1"/><rect x="7" y="8" width="1" height="1"/><rect x="10" y="8" width="1" height="1"/></g></svg>

<div class="a green" style="left:279px;top:540px;width:1014px;height:233px;border:1px solid #828790"></div>
<div class="a" style="left:280px;top:541px;width:1012px;height:24px;background:linear-gradient(#ffffff 0%,#fdfdfd 35%,#f2f3f5 38%,#eef0f2 100%);border-bottom:1px solid #d5d5d5"></div>
<div class="a" style="left:429px;top:541px;width:1px;height:24px;background:#e0e0e0"></div>
<div class="a" style="left:1001px;top:541px;width:1px;height:24px;background:#e0e0e0"></div>
<div class="a" style="left:1101px;top:541px;width:1px;height:24px;background:#e0e0e0"></div>
<div class="a hdr" style="left:322px;top:546px">Description</div>
<div class="a hdr" style="left:699px;top:546px">Script</div>
<div class="a hdr" style="left:1035px;top:546px">Status</div>
<div class="a hdr" style="left:1176px;top:546px">Actions</div>
</body></html>
